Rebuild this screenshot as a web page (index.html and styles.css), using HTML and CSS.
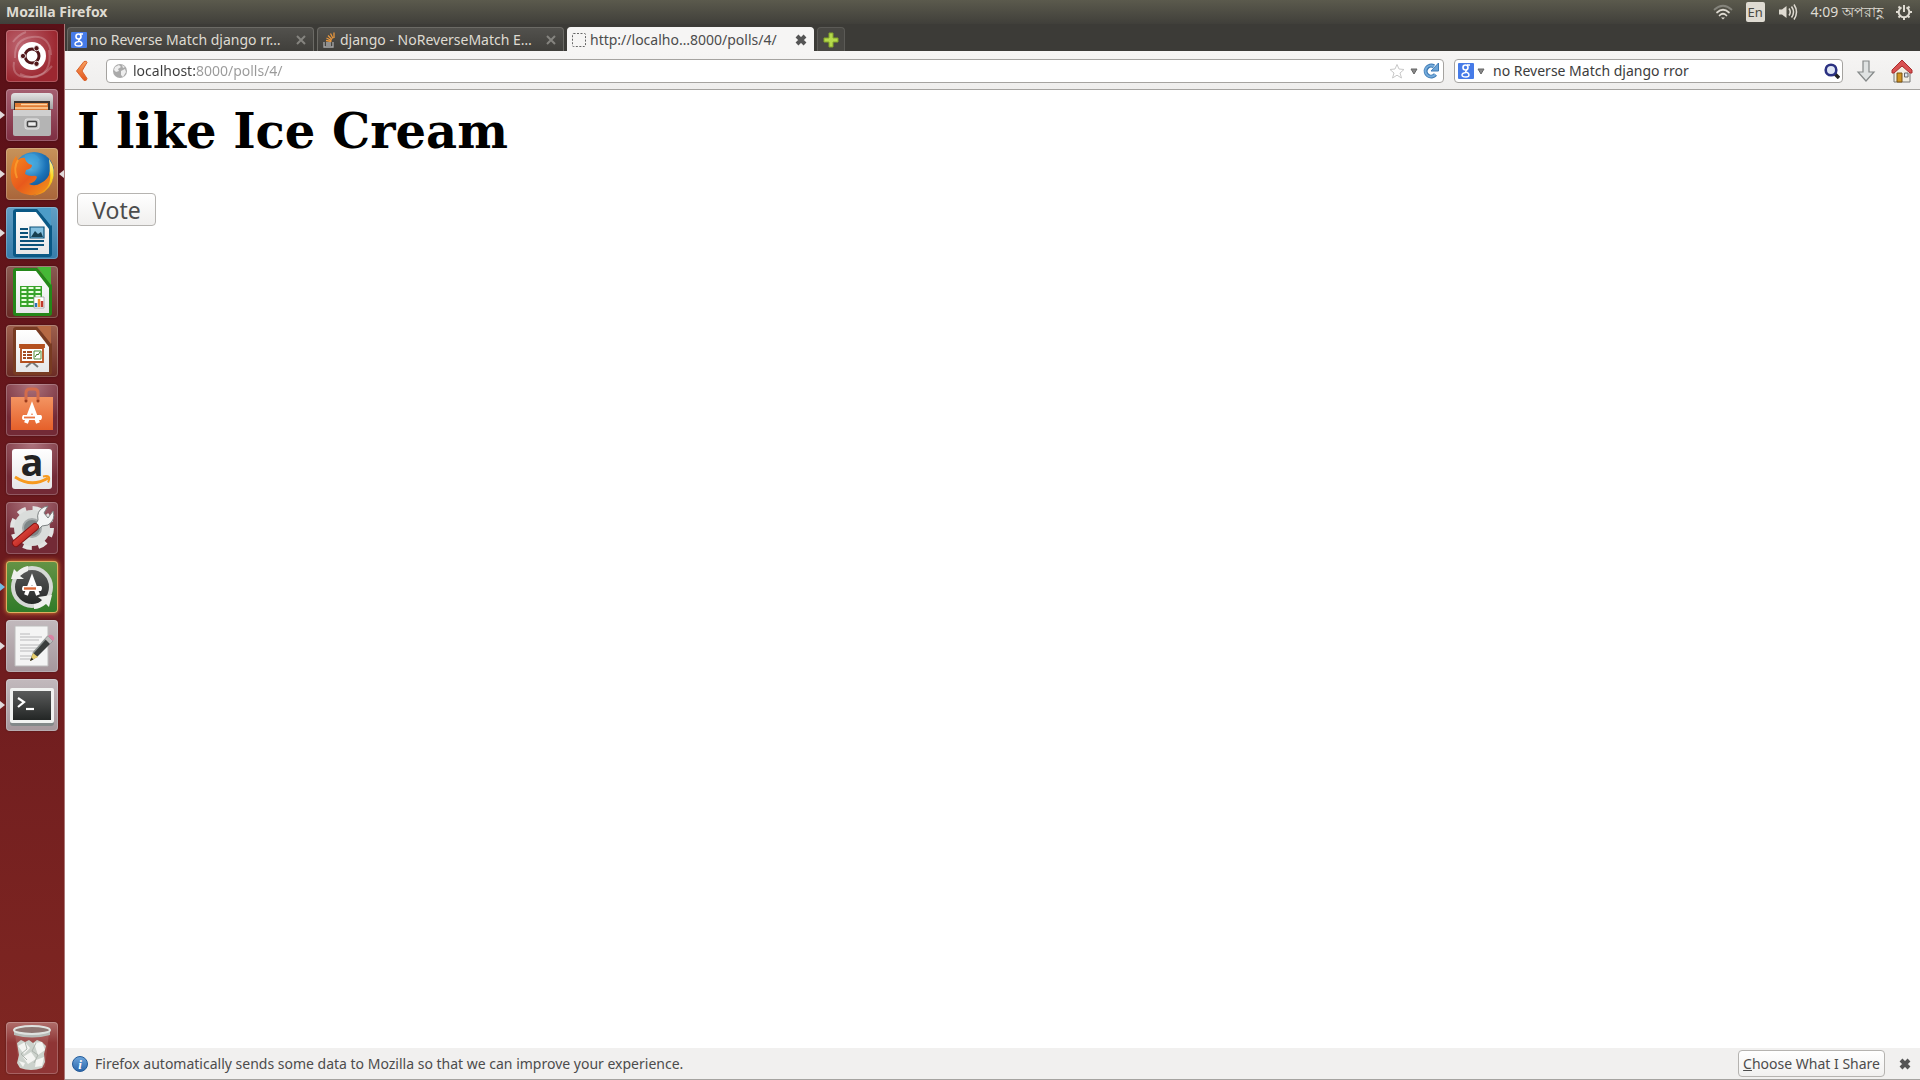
FILE: index.html
```html
<!DOCTYPE html>
<html lang="en">
<head>
<meta charset="utf-8">
<title>Mozilla Firefox</title>
<link rel="stylesheet" href="styles.css">
</head>
<body>
<svg class="defs" aria-hidden="true">
  <defs>
    <linearGradient id="metal" x1="0" y1="0" x2="0" y2="1"><stop offset="0" stop-color="#e4e4e4"/><stop offset="1" stop-color="#a2a2a2"/></linearGradient>
    <linearGradient id="paper" x1="0" y1="0" x2="0" y2="1"><stop offset="0" stop-color="#fff"/><stop offset="1" stop-color="#e6e6e8"/></linearGradient>
    <linearGradient id="dark" x1="0" y1="0" x2="0" y2="1"><stop offset="0" stop-color="#5a5b5b"/><stop offset="1" stop-color="#232625"/></linearGradient>
    <linearGradient id="bag" x1="0" y1="0" x2="0" y2="1"><stop offset="0" stop-color="#f39462"/><stop offset="1" stop-color="#e5602a"/></linearGradient>
    <linearGradient id="fox" x1="0" y1="0" x2="1" y2="1"><stop offset="0" stop-color="#f58a1f"/><stop offset=".5" stop-color="#e8591c"/><stop offset="1" stop-color="#f29a1c"/></linearGradient>
    <linearGradient id="flame" x1="0" y1="0" x2="0" y2="1"><stop offset="0" stop-color="#fff3a0"/><stop offset=".5" stop-color="#fbd51e"/><stop offset="1" stop-color="#f08a18"/></linearGradient>
    <radialGradient id="globe" cx=".4" cy=".3" r=".8"><stop offset="0" stop-color="#6cc5ee"/><stop offset=".5" stop-color="#1b73b8"/><stop offset="1" stop-color="#0e3c78"/></radialGradient>
    <linearGradient id="orange" x1="0" y1="0" x2="0" y2="1"><stop offset="0" stop-color="#f9a15f"/><stop offset="1" stop-color="#e3551c"/></linearGradient>
    <linearGradient id="info" x1="0" y1="0" x2="0" y2="1"><stop offset="0" stop-color="#6ea6dc"/><stop offset="1" stop-color="#2a66ab"/></linearGradient>
    <linearGradient id="handle" x1="0" y1="0" x2="1" y2="1"><stop offset="0" stop-color="#ee5a4e"/><stop offset="1" stop-color="#ae1512"/></linearGradient>
    <symbol id="google" viewBox="0 0 16 16"><rect width="16" height="16" rx="1" fill="#467be8"/><g fill="none" stroke="#fff"><circle cx="7.500" cy="4.500" r="2.500" stroke-width="1.600"/><path d="M9 2h3M9 7q-2 1-1 2 3 1 3 3 0 2-3 2-4 0-4-2 0-2 4-2.500" stroke-width="1.400"/></g></symbol>
    <symbol id="cross" viewBox="0 0 12 12"><path d="M2 2l8 8M10 2l-8 8" fill="none" stroke="currentColor"/></symbol>
  </defs>
</svg>

<header class="panel">
  <span class="panel-title">Mozilla Firefox</span>
  <div class="indicators">
    <svg width="20" height="18" viewBox="0 0 20 18" fill="none" stroke-width="1.700" stroke-linecap="round"><path d="M1.500 6.500Q10-1 18.500 6.500" stroke="#85847c"/><path d="M4 9.500Q10 4 16 9.500M6.500 12.500Q10 9 13.500 12.500" stroke="#dfdbd2"/><path d="M8 14.500h4L10 16.500z" fill="#dfdbd2" stroke="none"/></svg>
    <span class="keyboard">En</span>
    <svg width="20" height="18" viewBox="0 0 20 18" fill="none" stroke="#dfdbd2" stroke-width="1.500"><path d="M1 6.500h3L8.500 3v12L4 11.500H1z" fill="#dfdbd2" stroke="none"/><path d="M11 5.500q2.500 3.500 0 7M13.500 3.500q4 5.500 0 11M16 1.500q5 7.500 0 15"/></svg>
    <time class="clock">4:09 অপরাহ্ণ</time>
    <svg width="16" height="16" viewBox="0 0 16 16" fill="none" stroke="#dfdbd2"><path d="M5.500 3.300a5.300 5.300 0 1 0 5 0" stroke-width="2"/><path d="M8 1v7" stroke-width="2"/><path d="M2.500 2.500L4.500 4.500M13.500 2.500L11.500 4.500M0 8h3M13 8h3M2.500 13.500l2-2M13.500 13.500l-2-2M8 13v3" stroke-width="2"/></svg>
  </div>
</header>

<div class="desktop">
  <nav class="launcher" aria-label="Launcher">
    <button class="tile t-dash" aria-label="Dash"><svg viewBox="0 0 52 52"><g fill="none" stroke="#fff" stroke-opacity=".22" stroke-width="2"><path d="M9 28Q8 9 26 7T45 25M43 20q4 25-17 27T8 32"/><path d="M7 12q5-7 13-10M14 44q18 9 32-8"/></g><circle cx="26" cy="26" r="14" fill="#fff"/><circle cx="26" cy="26" r="7" fill="none" stroke="#511619" stroke-width="3"/><g fill="#511619" stroke="#fff" stroke-width=".8"><circle cx="17" cy="26" r="2.600"/><circle cx="30.500" cy="18.200" r="2.600"/><circle cx="30.500" cy="33.800" r="2.600"/></g></svg></button>
    <button class="tile t-files running" aria-label="Files"><svg viewBox="0 0 52 52"><path d="M5 20V8q0-4 4-4h34q4 0 4 4v12z" fill="url(#metal)"/><path d="M8 12h36v10H8z" fill="#3c3430"/><path d="M9 14h33v8H9z" fill="#e07c35"/><path d="M15 15.500h26M9 19h33" stroke="#ffd4a0" stroke-width="1.500"/><path d="M7 21h38v24q0 2-2 2H9q-2 0-2-2z" fill="#b4b4b4"/><path d="M7 21h38v6H7z" fill="#cfcfcf"/><rect x="19" y="30" width="14" height="10" rx="2" fill="#c5c5c5" stroke="#e6e6e6"/><rect x="21.500" y="32.500" width="9" height="5" rx="1" fill="#eee" stroke="#444" stroke-width="1.500"/></svg></button>
    <button class="tile t-firefox running focused" aria-label="Firefox"><svg viewBox="0 0 52 52"><circle cx="28" cy="24" r="20" fill="url(#globe)"/><path d="M19 7q8-3 12 1l3 4-4 3 3 3-5 4-5-3-4 1z" fill="#3ba0da" opacity=".65"/><path d="M43 11Q51 22 46 34 41 46 27 48q12-5 15-15 3-9 1-22z" fill="url(#flame)"/><path d="M7 13l3-5 2 4q3-3 7-2 0 3 4 6l3 1q0 4-6 5l-1 4q3 2 7 2 4-1 5 1-1 5-8 7 6 3 12-1 8-4 9-12 2 15-8 21-8 5-17 2Q6 42 5 30q-1-9 2-17z" fill="url(#fox)"/><path d="M12 12q-5 8-1 18" fill="none" stroke="#ffab32" stroke-width="2" opacity=".65"/></svg></button>
    <button class="tile t-writer running" aria-label="LibreOffice Writer"><svg viewBox="0 0 52 52"><path d="M7 5q0-3 3-3h21l15 17v28q0 3-3 3H10q-3 0-3-3z" fill="#0a5885"/><path d="M31 1h14v18z" fill="#4c9cc8"/><path d="M10 5h20l13 17v25H10z" fill="url(#paper)"/><path d="M14 22h8M14 26h8M14 30h8M14 34h24M14 38h24M14 42h18" stroke="#0c527a" stroke-width="2"/><path d="M24 20h14v11H24z" fill="#84bfdf" stroke="#0c527a" stroke-width="1.200"/><path d="M25 30l4-6 3 3 3-2 2 5z" fill="#163f51"/></svg></button>
    <button class="tile t-calc" aria-label="LibreOffice Calc"><svg viewBox="0 0 52 52"><path d="M7 5q0-3 3-3h21l15 17v28q0 3-3 3H10q-3 0-3-3z" fill="#248719"/><path d="M31 1h14v18z" fill="#45b836"/><path d="M10 5h20l13 17v25H10z" fill="url(#paper)"/><path d="M14 20h22v21H14z" fill="#38a32a"/><path d="M15.500 22h5M22.500 22h5M29.500 22h5M15.500 26h5M22.500 26h5M29.500 26h5M15.500 30h5M22.500 30h5M29.500 30h5M15.500 34h5M22.500 34h5M15.500 38h5M22.500 38h5" stroke="#eaffdf" stroke-width="2.200"/><path d="M28 31h10v11H28z" fill="#fff" stroke="#999" stroke-width=".7"/><path d="M30 41v-4" stroke="#2975b4" stroke-width="2.500"/><path d="M33 41v-8" stroke="#ed912c" stroke-width="2.500"/><path d="M36 41v-6" stroke="#bf392c" stroke-width="2.500"/></svg></button>
    <button class="tile t-impress" aria-label="LibreOffice Impress"><svg viewBox="0 0 52 52"><path d="M7 5q0-3 3-3h21l15 17v28q0 3-3 3H10q-3 0-3-3z" fill="#783b22"/><path d="M31 1h14v18z" fill="#b66943"/><path d="M10 5h20l13 17v25H10z" fill="url(#paper)"/><path d="M20 42l6-5 6 5" fill="none" stroke="#777" stroke-width="2"/><path d="M14 20h24v2H14zM15 23h22v14H15z" fill="#fff" stroke="#b4501f" stroke-width="1.800"/><path d="M17 27h3M17 30h3M17 33h3M21 27h5M21 30h5M21 33h5" stroke="#a44c22" stroke-width="1.800"/><path d="M28 26h7v8h-7z" fill="#fff" stroke="#528f3b"/><path d="M29 32l2-3 1 1 2-3" fill="none" stroke="#3b7b25"/></svg></button>
    <button class="tile t-store" aria-label="Ubuntu Software Centre"><svg viewBox="0 0 52 52"><path d="M5 13h42v33H5z" fill="url(#bag)"/><path d="M20 17V9q0-4 4-4h4q4 0 4 4v8" fill="none" stroke="#d36c4b" stroke-width="3"/><circle cx="20" cy="17" r="1.500" fill="#9b3c1c"/><circle cx="32" cy="17" r="1.500" fill="#9b3c1c"/><path d="M20 39l6-16 6 16" fill="none" stroke="#fff" stroke-width="4"/><path d="M17 31h18q2 2 0 5H17q-2-2 0-5z" fill="#fff"/><path d="M18 33.500h11" stroke="#eb7541" stroke-width="1.800"/></svg></button>
    <button class="tile t-amazon" aria-label="Amazon"><svg viewBox="0 0 52 52"><rect x="6" y="6" width="40" height="40" rx="3" fill="url(#paper)"/><text x="26" y="33" text-anchor="middle" class="amazon-letter">a</text><path d="M9 34q17 11 33 1" fill="none" stroke="#f79a1e" stroke-width="2.800"/><path d="M37 33.500q9-2 5 6" fill="none" stroke="#f79a1e" stroke-width="2"/></svg></button>
    <button class="tile t-settings" aria-label="System Settings"><svg viewBox="0 0 52 52"><circle cx="26" cy="26" r="19" fill="none" stroke="#e2e3e2" stroke-width="6" stroke-dasharray="8.500 6.420"/><circle cx="26" cy="26" r="13.500" fill="none" stroke="#dadddb" stroke-width="9"/><circle cx="26" cy="26" r="9" fill="#7d8586" stroke="#a5aaaa" stroke-width="2"/><path d="M28 25l4-7q-2-9 6-13l4-1-4 7 4 5 5-7q3 9-5 14l-6 1-5 5z" fill="#f3f5f4" stroke="#7d8282"/><path d="M10 41L29 25" stroke="#851212" stroke-width="8" stroke-linecap="round"/><path d="M10 41L29 25" stroke="url(#handle)" stroke-width="6" stroke-linecap="round"/></svg></button>
    <button class="tile t-updater running" aria-label="Software Updater"><svg viewBox="0 0 52 52"><circle cx="26" cy="26" r="19" fill="url(#dark)" stroke="#d5d8d5" stroke-width="4"/><path d="M5 18L8 8l3 3q5-5 11-6v5q-5 2-8 5l4 3zM46 34l-3 12-3-3q-6 5-12 5v-5q5 0 8-4l-4-3z" fill="#eef0ed"/><path d="M20 34l6-16 6 16" fill="none" stroke="#fff" stroke-width="4"/><path d="M17 25h18q2 2 0 5H17q-2-2 0-5z" fill="#fff"/><path d="M18 27.500h12" stroke="#dc6635" stroke-width="2.400"/></svg></button>
    <button class="tile t-gedit running" aria-label="Text Editor"><svg viewBox="0 0 52 52"><path d="M9 6h33v40H9z" fill="#f4f4f4" stroke="#bcbcbc"/><path d="M14 14h10M14 17h22M14 20h19M14 25h22M14 28h18M14 31h20M14 36h17M14 39h11" stroke="#b8b8ba" stroke-width="1.200"/><path d="M24 41l3-8 15-17 5 5-16 16z" fill="#393d3c"/><path d="M27 33l15-17" stroke="#8c9291" stroke-width="1.500"/><path d="M24 41l3-8 5 4z" fill="#e5cd6d"/><path d="M24 41l1.500-3.500 2 2z" fill="#222"/><path d="M39 19l3-3 5 5-3 3z" fill="#bbb"/><path d="M42 16q3-3 6 1 1 2-1 4z" fill="#d982a4"/></svg></button>
    <button class="tile t-terminal running" aria-label="Terminal"><svg viewBox="0 0 52 52"><rect x="4" y="10" width="44" height="37" rx="3" fill="#83898a"/><rect x="4" y="9" width="44" height="35" rx="2" fill="#f1f2f1"/><path d="M7 12h38v29H7z" fill="url(#dark)"/><path d="M12 19l6 4-6 5" fill="none" stroke="#fff" stroke-width="2.200"/><path d="M20 30h8" stroke="#fff" stroke-width="2.200"/></svg></button>
    <button class="tile t-trash" aria-label="Trash"><svg viewBox="0 0 52 52"><path d="M9 11h34l-4 34q-13 5-26 0z" fill="#dfb4ae" opacity=".18"/><path d="M11 21l4-3 4 2 4-2 4 3 4-3 5 2 4 4-2 8 1 8-3 6q-11 4-22 0l-3-5 2-8z" fill="#ccd2cc"/><path d="M12 24l7-4 5 6-6 6zM28 21l8-1 3 8-7 5zM17 35l8-5 5 7-8 5zM30 38l8-3-2 9-7 1zM13 39l6 2-2 4z" fill="#f4f5f2"/><path d="M19 20l2 7-6 5 6 6M30 21l-4 8 6 4-4 8" stroke="#adb4ad" fill="none"/><path d="M8 8v5q18 5 36 0V8z" fill="#b7bcb8"/><ellipse cx="26" cy="8" rx="18" ry="4" fill="#8e7773" stroke="#dfe3e0" stroke-width="2"/></svg></button>
  </nav>

  <div class="browser">
    <div class="tabs">
      <div class="tab"><a href="#search"><svg width="16" height="16"><use href="#google"/></svg><span>no Reverse Match django rr…</span></a><button aria-label="Close tab"><svg width="12" height="12"><use href="#cross"/></svg></button></div>
      <div class="tab"><a href="#question"><svg width="16" height="16" viewBox="0 0 16 16" fill="none"><path d="M3 10v5h9v-5M5 13h5M5 11h5" stroke="#aaa" stroke-width="1.300"/><path d="M5 8.500l5.500 1M5.500 6l5 2.500M7 3.500l4 4M9.500 1.500L12 6.500M13 .5V6" stroke="#e8973d" stroke-width="1.300"/></svg><span>django - NoReverseMatch E…</span></a><button aria-label="Close tab"><svg width="12" height="12"><use href="#cross"/></svg></button></div>
      <div class="tab active"><a href="#page"><svg width="16" height="16" viewBox="0 0 16 16"><rect x="1.500" y="1.500" width="13" height="13" rx="1" fill="none" stroke="#666" stroke-dasharray="2 1.500"/></svg><span>http://localho…8000/polls/4/</span></a><button aria-label="Close tab"><svg width="12" height="12"><use href="#cross"/></svg></button></div>
      <button class="new-tab" aria-label="New tab"><svg width="16" height="16" viewBox="0 0 16 16"><path d="M6 1h4v5h5v4h-5v5H6v-5H1V6h5z" fill="#b5d94b" stroke="#83a52b"/></svg></button>
    </div>

    <div class="toolbar">
      <button class="back" aria-label="Back"><svg width="14" height="22" viewBox="0 0 14 22"><path d="M9 1.500q3-1 3 1L7 11l5 7.500q0 2.500-3 2L1.500 11z" fill="url(#orange)" stroke="#d9622b"/></svg></button>
      <div class="field address">
        <svg width="16" height="16" viewBox="0 0 16 16"><circle cx="8" cy="8" r="7" fill="#aaa"/><path d="M3 4l4-2 2 2-3 2 1 2-3 1-2-2zM9 8l4-2 1 3-3 5-2-2zM10 2l3 2-2 1z" fill="#eee"/></svg>
        <input class="url" type="text" value="localhost:8000/polls/4/" aria-label="Address">
        <button aria-label="Bookmark"><svg width="16" height="16" viewBox="0 0 16 16"><path d="M8 1.500l2 4.500 5 .5-4 3.500 1.500 5L8 12.200 3.500 15 5 10 1 6.500 6 6z" fill="#fff" stroke="#c8c8c8"/></svg></button>
        <button aria-label="History"><svg width="8" height="8" viewBox="0 0 8 8"><path d="M1 2h6L4 7z" fill="#888" stroke="#666"/></svg></button>
        <button aria-label="Reload"><svg width="16" height="16" viewBox="0 0 16 16"><path d="M12.500 11.500A5.500 5.500 0 1 1 11 3.300" fill="none" stroke="#3e79b3" stroke-width="4"/><path d="M15.500 0v8H8z" fill="#6ba3d6" stroke="#3e79b3"/><path d="M12.300 11.300A5.500 5.500 0 1 1 11 3.500" fill="none" stroke="#75acdc" stroke-width="2"/></svg></button>
      </div>
      <div class="field search">
        <button class="engine" aria-label="Search engine"><svg width="16" height="16"><use href="#google"/></svg><svg width="8" height="8" viewBox="0 0 8 8"><path d="M1 2h6L4 7z" fill="#888" stroke="#666"/></svg></button>
        <input type="text" value="no Reverse Match django rror" aria-label="Search">
        <button aria-label="Search"><svg width="16" height="16" viewBox="0 0 16 16"><path d="M11 11l4 4" stroke="#222" stroke-width="3.500"/><circle cx="7" cy="7" r="5.300" fill="#dfe6f5" stroke="#2b3282" stroke-width="2.600"/></svg></button>
      </div>
      <button class="tool" aria-label="Downloads"><svg width="20" height="22" viewBox="0 0 20 22"><path d="M7 1h6v11h5l-8 9-8-9h5z" fill="#dfe2e2" stroke="#858989" stroke-width="1.200"/></svg></button>
      <button class="tool" aria-label="Home"><svg width="22" height="24" viewBox="0 0 22 24"><path d="M3 11l8-7 8 7v12H3z" fill="#f1eee2" stroke="#777"/><path d="M6 14h5v9H6z" fill="#d39622" stroke="#795312"/><path d="M13.500 14h3.500v4h-3.500z" fill="#dce8f5" stroke="#666"/><path d="M11 1L1 11v3h2l8-7 8 7h2v-3z" fill="#d95151" stroke="#a82c2c"/></svg></button>
    </div>

    <main class="page">
      <h1>I like Ice Cream</h1>
      <form><button type="button" class="vote">Vote</button></form>
    </main>

    <aside class="notice">
      <svg width="16" height="16" viewBox="0 0 16 16"><circle cx="8" cy="8" r="7.500" fill="url(#info)" stroke="#245b99"/><text x="8" y="13" text-anchor="middle" class="info-letter">i</text></svg>
      <p>Firefox automatically sends some data to Mozilla so that we can improve your experience.</p>
      <button class="choose"><u>C</u>hoose What I Share</button>
      <button class="dismiss" aria-label="Dismiss"><svg width="12" height="12"><use href="#cross"/></svg></button>
    </aside>
  </div>
</div>
</body>
</html>
```
FILE: styles.css
```css
* { box-sizing: border-box; }
body {
  margin: 0;
  min-height: 100vh;
  display: flex;
  flex-direction: column;
  font: 14px/20px "Noto Sans", "Open Sans", sans-serif;
  color: #4c4c4c;
}
button {
  padding: 0;
  border: 0;
  background: none;
  font: inherit;
  color: inherit;
}
svg { display: block; flex: none; }
.defs { position: absolute; width: 0; height: 0; }

.panel {
  height: 24px;
  display: flex;
  align-items: center;
  justify-content: space-between;
  padding: 0 8px 0 6px;
  background: linear-gradient(#5b5a4d, #403f3a);
  color: #dfdbd2;
}
.panel-title { font-weight: bold; }
.indicators { display: flex; align-items: center; gap: 13px; }
.keyboard {
  width: 19px;
  height: 20px;
  border-radius: 2px;
  background: #dfdbd2;
  color: #4a4943;
  font-size: 13px;
  text-align: center;
}
.clock { white-space: nowrap; }

.desktop { flex: 1; display: flex; }
.launcher {
  width: 65px;
  display: flex;
  flex-direction: column;
  gap: 7px;
  padding: 6px 6px;
  background: linear-gradient(#5a1017, #6b1a1e 50%, #802722);
  border-right: 1px solid #a77;
}
.tile {
  position: relative;
  width: 52px;
  height: 52px;
  border-radius: 4px;
  background: radial-gradient(circle at 50% 0, #ad747d, #732a36 70%);
  box-shadow: inset 0 0 0 1px #ffffff38, 0 0 2px #0006;
}
.t-dash { background: radial-gradient(circle at 30% 30%, #bd6570, #9c2730 70%); }
.t-files { background: linear-gradient(#a55f70, #7e2e42); }
.t-firefox { background: linear-gradient(#c7935a, #a9653a); }
.t-writer { background: linear-gradient(#629fc5, #367ca9); }
.t-calc { background: linear-gradient(#8a5b53, #682a25); }
.t-impress { background: linear-gradient(#9e604e, #6b2b24); }
.t-updater { background: linear-gradient(#659346, #2f7b28); box-shadow: inset 0 0 0 1px #dfae61, 0 0 5px #eb913d; }
.t-gedit, .t-terminal { background: linear-gradient(#c2b9bd, #a5979c); }
.t-trash { margin-top: auto; background: linear-gradient(#b06e6b, #8f3535 40%); }
.running::before, .focused::after {
  content: "";
  position: absolute;
  top: 22px;
  left: -6px;
  border: 4px solid transparent;
  border-left: 5px solid #e2dadb;
  border-right: 0;
}
.focused::after {
  left: auto;
  right: -6px;
  border-left: 0;
  border-right: 5px solid #e2dadb;
}
.t-updater::before { border-left-color: #72bce5; }
.amazon-letter { font: bold 38px "Open Sans", sans-serif; fill: #222; }
.info-letter { font: italic bold 13px "Liberation Serif", serif; fill: #fff; }

.browser { flex: 1; min-width: 0; display: flex; flex-direction: column; background: #fff; }
.tabs {
  height: 27px;
  display: flex;
  align-items: flex-end;
  gap: 3px;
  padding: 0 2px;
  background: #3c3b37;
}
.tab {
  width: 247px;
  height: 24px;
  display: flex;
  align-items: center;
  gap: 8px;
  padding: 0 6px 0 3px;
  border: 1px solid #6b6a65;
  border-bottom: 0;
  border-radius: 4px 4px 0 0;
  background: linear-gradient(#52514d, #403f3b);
  color: #dfdbd2;
}
.tab a {
  flex: 1;
  display: flex;
  align-items: center;
  gap: 3px;
  white-space: nowrap;
  color: inherit;
  text-decoration: none;
}
.tab button { color: #85847f; stroke-width: 2; }
.tab.active { background: #f6f5f4; border-color: #f6f5f4; color: #4c4c4c; }
.tab.active button, .dismiss { color: #555; stroke-width: 4; }
.new-tab {
  width: 28px;
  height: 24px;
  display: grid;
  place-items: center;
  border: 1px solid #5b5a56;
  border-bottom: 0;
  border-radius: 4px 4px 0 0;
  background: #484743;
}

.toolbar {
  height: 39px;
  display: flex;
  align-items: center;
  gap: 10px;
  padding: 1px 5px 0 10px;
  background: linear-gradient(#f6f5f4, #efeeed);
  border-bottom: 1px solid #a5a3a0;
}
.back { margin-right: 7px; }
.field {
  height: 24px;
  display: flex;
  align-items: center;
  gap: 5px;
  padding: 0 4px;
  background: #fff;
  border: 1px solid #a5a3a0;
  border-radius: 4px;
}
.field input {
  flex: 1;
  min-width: 0;
  height: 20px;
  padding: 0;
  border: 0;
  outline: 0;
  background: none;
  font: inherit;
  color: #3c3c3c;
}
.address { flex: 1; padding-left: 5px; }
.field .url {
  background: linear-gradient(90deg, #3c3c3c 62px, #999 62px);
  background-clip: text;
  -webkit-background-clip: text;
  color: transparent;
}
.search { width: 389px; gap: 8px; padding: 0 2px 0 3px; }
.engine { display: flex; align-items: center; gap: 3px; }
.tool { width: 26px; display: grid; place-items: center; }

.page { flex: 1; padding: 12px 12px; }
h1 {
  margin: 0 0 33px;
  font: bold 48px/58px "DejaVu Serif", serif;
  color: #000;
}
.vote {
  width: 79px;
  height: 33px;
  border: 1px solid #b5b3b0;
  border-radius: 4px;
  background: linear-gradient(#fff, #f0efee);
  font-size: 23px;
  line-height: 28px;
}
.notice {
  height: 32px;
  display: flex;
  align-items: center;
  gap: 7px;
  padding: 0 9px 0 7px;
  background: #f1f0ef;
  border-bottom: 1px solid #a5a3a0;
}
.notice p { flex: 1; margin: 0; }
.choose {
  height: 27px;
  padding: 0 4px;
  border: 1px solid #b5b3b0;
  border-radius: 4px;
  background: linear-gradient(#fff, #f1f0ef);
}
.dismiss { margin-left: 7px; }
```
